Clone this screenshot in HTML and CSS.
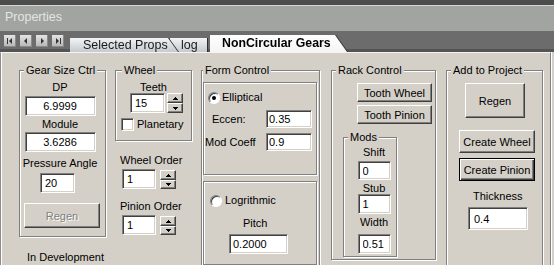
FILE: index.html
```html
<!DOCTYPE html>
<html>
<head>
<meta charset="utf-8">
<link rel="stylesheet" href="styles.css">
</head>
<body>
<div class="title">Properties</div>
<div class="tabstrip">
  <div class="nav">
    <span class="navbtn"><svg width="12" height="12" viewBox="0 0 12 12"><rect x="3" y="3" width="1" height="6"/><path d="M8 3v6L5 6z"/></svg></span>
    <span class="navbtn"><svg width="12" height="12" viewBox="0 0 12 12"><path d="M7 3v6L4 6z"/></svg></span>
    <span class="navbtn"><svg width="12" height="12" viewBox="0 0 12 12"><path d="M5 3v6l3-3z"/></svg></span>
    <span class="navbtn"><svg width="12" height="12" viewBox="0 0 12 12"><path d="M4 3v6l3-3z"/><rect x="8" y="3" width="1" height="6"/></svg></span>
  </div>
  <div class="tabs">
    <div class="tab tab-sel"><div class="face">Selected Props</div></div>
    <div class="tab tab-log"><div class="face">log</div></div>
    <div class="tab tab-act"><div class="face">NonCircular Gears</div></div>
  </div>
</div>
<div class="panel">
  <div class="col col-a">
    <fieldset class="grp g-gear">
      <legend>Gear Size Ctrl</legend>
      <div class="gbody">
        <div class="lbl l-dp">DP</div>
        <input class="tb tb-dp" value="6.9999">
        <div class="lbl l-mod">Module</div>
        <input class="tb tb-mod" value="3.6286">
        <div class="lbl l-pa">Pressure Angle</div>
        <input class="tb tb-pa" value="20">
        <button class="btn b-dis" disabled>Regen</button>
      </div>
    </fieldset>
    <div class="dev">In Development</div>
  </div>

  <div class="col col-b">
    <fieldset class="grp g-wheel">
      <legend>Wheel</legend>
      <div class="wbody">
        <div class="lbl l-teeth">Teeth</div>
        <div class="spin spin-teeth">
          <input class="tb tb-teeth" value="15">
          <span class="spinbtns">
            <span class="sb"><svg width="5" height="3" viewBox="0 0 5 3"><path d="M2 0h1v1h1v1h1v1H0V2h1V1h1z"/></svg></span>
            <span class="sb"><svg width="5" height="3" viewBox="0 0 5 3"><path d="M0 0h5v1H4v1H3v1H2V2H1V1H0z"/></svg></span>
          </span>
        </div>
        <div class="chk-row"><span class="chk"></span>Planetary</div>
      </div>
    </fieldset>
    <div class="lbl l-order">Wheel Order</div>
    <div class="spin spin-order">
      <input class="tb tb-order" value="1">
      <span class="spinbtns">
        <span class="sb"><svg width="5" height="3" viewBox="0 0 5 3"><path d="M2 0h1v1h1v1h1v1H0V2h1V1h1z"/></svg></span>
        <span class="sb"><svg width="5" height="3" viewBox="0 0 5 3"><path d="M0 0h5v1H4v1H3v1H2V2H1V1H0z"/></svg></span>
      </span>
    </div>
    <div class="lbl l-order2">Pinion Order</div>
    <div class="spin spin-order">
      <input class="tb tb-order" value="1">
      <span class="spinbtns">
        <span class="sb"><svg width="5" height="3" viewBox="0 0 5 3"><path d="M2 0h1v1h1v1h1v1H0V2h1V1h1z"/></svg></span>
        <span class="sb"><svg width="5" height="3" viewBox="0 0 5 3"><path d="M0 0h5v1H4v1H3v1H2V2H1V1H0z"/></svg></span>
      </span>
    </div>
  </div>

  <div class="col col-c">
    <fieldset class="grp g-form">
      <legend>Form Control</legend>
      <div class="frame f1">
        <div class="radio-row r1"><span class="radio on"></span>Elliptical</div>
        <div class="frow r-eccen"><span class="flbl">Eccen:</span><input class="tb tb-f" value="0.35"></div>
        <div class="frow r-modc"><span class="flbl">Mod Coeff</span><input class="tb tb-f" value="0.9"></div>
      </div>
      <div class="frame f2">
        <div class="radio-row r2"><span class="radio"></span>Logrithmic</div>
        <div class="lbl l-pitch">Pitch</div>
        <input class="tb tb-pitch" value="0.2000">
      </div>
    </fieldset>
  </div>

  <div class="col col-d">
    <fieldset class="grp g-rack">
      <legend>Rack Control</legend>
      <div class="rbody">
        <button class="btn b-tooth">Tooth Wheel</button>
        <button class="btn b-tooth b-tooth2">Tooth Pinion</button>
        <fieldset class="grp g-mods">
          <legend>Mods</legend>
          <div class="mbody">
            <div class="lbl l-shift">Shift</div>
            <input class="tb tb-mods tb-shift" value="0">
            <div class="lbl l-stub">Stub</div>
            <input class="tb tb-mods" value="1">
            <div class="lbl l-width">Width</div>
            <input class="tb tb-mods tb-width" value="0.51">
          </div>
        </fieldset>
      </div>
    </fieldset>
  </div>

  <div class="col col-e">
    <fieldset class="grp g-add">
      <legend>Add to Project</legend>
      <div class="abody">
        <button class="btn b-regen">Regen</button>
        <button class="btn b-create b-cw">Create Wheel</button>
        <button class="btn b-create b-cp b-default">Create Pinion</button>
        <div class="lbl l-thick">Thickness</div>
        <input class="tb tb-thick" value="0.4">
      </div>
    </fieldset>
  </div>
</div>
</body>
</html>
```

FILE: styles.css
```css
* { box-sizing: border-box; }
html, body { margin: 0; padding: 0; }
body {
  width: 554px;
  height: 265px;
  overflow: hidden;
  background: #d4d0c8;
  font-family: "Liberation Sans", Arial, sans-serif;
  font-size: 11px;
  color: #000;
}

/* title */
.title {
  height: 31px;
  border-top: 5px solid #4d4d4d;
  background: #a2a4a2;
  box-shadow: inset 0 1px 0 #d6d6d6;
  color: #e4e4e4;
  font-size: 12.5px;
  line-height: 24px;
  padding-left: 5px;
}

/* tab strip */
.tabstrip {
  height: 21px;
  background: #6c6c6c;
  box-shadow: inset 0 -3px 0 #545454;
  display: flex;
  align-items: flex-end;
  padding-left: 4px;
}
.nav {
  display: flex;
  gap: 4px;
  align-self: flex-start;
  margin-top: 4px;
}
.navbtn {
  width: 12px;
  height: 12px;
  display: block;
  background: linear-gradient(#e4e4e4, #b4b4b4);
  box-shadow: inset -1px -1px 0 #8a8a8a;
}
.navbtn svg { display: block; fill: #333; }

.tabs {
  display: flex;
  align-items: flex-end;
  margin-left: 6px;
}
.tab {
  position: relative;
  filter: drop-shadow(1px 0 0 #2e2e2e);
}
.face {
  font-size: 12.5px;
  color: #1a1a1a;
  white-space: nowrap;
}
.tab-sel { z-index: 2; }
.tab-sel .face {
  width: 108px;
  height: 14px;
  line-height: 14px;
  padding-left: 13px;
  background: linear-gradient(#f2f4f6, #c6cace);
  clip-path: polygon(0 0, 98px 0, 108px 100%, 0 100%);
}
.tab-log { z-index: 1; margin-left: -8px; }
.tab-log .face {
  width: 37px;
  height: 14px;
  line-height: 14px;
  padding-left: 11px;
  background: linear-gradient(#f2f4f6, #c6cace);
}
.tab-act { z-index: 3; margin-left: 3px; }
.tab-act .face {
  width: 137px;
  height: 17px;
  line-height: 16px;
  padding-left: 12px;
  font-weight: bold;
  font-size: 12.3px;
  color: #000;
  background: linear-gradient(#ffffff, #f4f4f4);
  clip-path: polygon(0 0, 125px 0, 137px 100%, 0 100%);
}

/* panel */
.panel {
  width: 551px;
  height: 213px;
  border-top: 1px solid #f4f4f4;
  border-left: 1px solid #8c8c8c;
  border-right: 1px solid #808080;
  box-shadow: 1px 0 0 #fff, inset 1px 0 0 #fff;
  display: flex;
  align-items: flex-start;
  padding-top: 11px;
  background: #d4d0c8;
}
.col { display: flex; flex-direction: column; align-items: flex-start; flex: none; }
.col-a { width: 87px; margin-left: 18px; }
.col-b { width: 77px; margin-left: 9px; }
.col-c { width: 119px; margin-left: 9px; }
.col-d { width: 105px; margin-left: 11px; }
.col-e { width: 97px; margin-left: 10px; }

/* groups */
.grp {
  margin: 0;
  padding: 0;
  min-width: 0;
  border: 1px solid #808080;
  box-shadow: 1px 1px 0 #fff, inset 1px 1px 0 #fff;
}
.grp > legend {
  padding: 0 2px;
  margin-left: 4px;
  line-height: 13px;
  font-size: 11px;
  background: #d4d0c8;
}
.frame {
  border: 1px solid #808080;
  box-shadow: 1px 1px 0 #fff, inset 1px 1px 0 #fff;
}

.lbl { line-height: 13px; white-space: nowrap; }

/* inputs */
.tb {
  display: block;
  margin: 0;
  font-family: "Liberation Sans", Arial, sans-serif;
  font-size: 11px;
  color: #000;
  background: #fff;
  border: 1px solid;
  border-color: #808080 #fff #fff #808080;
  box-shadow: inset 1px 1px 0 #404040, inset -1px -1px 0 #d4d0c8;
  padding: 0 0 0 3px;
  outline: none;
}

/* buttons */
.btn {
  display: block;
  margin: 0;
  padding: 0;
  font-family: "Liberation Sans", Arial, sans-serif;
  font-size: 11px;
  color: #000;
  background: #d4d0c8;
  border: 1px solid;
  border-color: #fff #404040 #404040 #fff;
  box-shadow: inset -1px -1px 0 #808080;
}
.b-default {
  border: 1px solid #000;
  box-shadow: inset 1px 1px 0 #fff, inset -1px -1px 0 #404040, inset -2px -2px 0 #808080;
}
.b-dis {
  color: #808080;
  text-shadow: 1px 1px 0 #fff;
}

/* col A */
.g-gear { width: 87px; }
.gbody {
  display: flex;
  flex-direction: column;
  align-items: center;
  padding: 4px 9px 8px 4px;
}
.tb-dp, .tb-mod { width: 71px; height: 20px; margin-top: 2px; text-align: center; padding: 0; }
.tb-mod { margin-top: 1px; }
.l-mod { margin-top: 2px; }
.l-pa { margin-top: 5px; }
.tb-pa { width: 35px; height: 20px; margin-top: 3px; margin-right: 5px; padding-left: 4px; }
.b-dis { width: 76px; height: 25px; margin-top: 10px; align-self: flex-start; }
.dev { margin-top: 14px; margin-left: 8px; line-height: 13px; white-space: nowrap; }

/* col B */
.g-wheel { width: 77px; }
.g-wheel > legend { margin-left: 6px; }
.wbody { display: flex; flex-direction: column; padding: 4px 0 9px 0; }
.l-teeth { line-height: 12px; text-align: center; }
.spin { display: flex; align-items: flex-start; }
.spin-teeth { margin-left: 14px; gap: 2px; }
.tb-teeth { width: 35px; height: 20px; padding-left: 4px; }
.spinbtns { display: flex; flex-direction: column; width: 16px; }
.sb {
  display: flex;
  align-items: center;
  justify-content: center;
  height: 10px;
  background: #d4d0c8;
  border: 1px solid;
  border-color: #fff #404040 #404040 #fff;
  box-shadow: inset -1px -1px 0 #808080;
}
.sb svg { display: block; fill: #000; }
.chk-row {
  display: flex;
  align-items: center;
  gap: 3px;
  margin-top: 4px;
  margin-left: 5px;
  height: 14px;
  line-height: 14px;
}
.chk {
  width: 13px;
  height: 13px;
  background: #fff;
  border: 1px solid;
  border-color: #808080 #fff #fff #808080;
  box-shadow: inset 1px 1px 0 #404040, inset -1px -1px 0 #d4d0c8;
}
.l-order { margin-top: 13px; margin-left: 5px; }
.l-order2 { margin-top: 11px; margin-left: 5px; }
.spin-order { margin-top: 2px; margin-left: 7px; gap: 4px; }
.tb-order { width: 34px; height: 20px; padding-left: 4px; }
.spin-order .spinbtns { margin-top: 1px; }
.spin-order .sb + .sb { height: 9px; }

/* col C */
.g-form { width: 119px; height: 203px; }
.g-form > legend { margin-left: 1px; }
.f1 { width: 114px; height: 93px; margin: 5px 0 0 1px; }
.f2 { width: 114px; height: 84px; margin: 6px 0 0 1px; }
.radio-row { display: flex; align-items: center; height: 13px; line-height: 13px; }
.r1 { margin-top: 8px; margin-left: 4px; gap: 2px; }
.r2 { margin-top: 12px; margin-left: 6px; gap: 3px; }
.radio {
  position: relative;
  width: 12px;
  height: 12px;
  border-radius: 50%;
  background: #fff;
  border: 1px solid;
  border-color: #808080 #fff #fff #808080;
  box-shadow: inset 1px 1px 0 #404040;
}
.radio.on::after {
  content: "";
  position: absolute;
  left: 3px;
  top: 3px;
  width: 4px;
  height: 4px;
  border-radius: 50%;
  background: #000;
}
.frow { display: flex; align-items: center; height: 18px; }
.r-eccen { margin-top: 6px; }
.r-modc { margin-top: 5px; }
.flbl { width: 62px; white-space: nowrap; }
.r-eccen .flbl { padding-left: 8px; }
.r-modc .flbl { padding-left: 1px; }
.tb-f { width: 46px; height: 18px; padding-left: 2px; }
.l-pitch { margin-top: 10px; margin-left: 39px; }
.tb-pitch { width: 59px; height: 20px; margin-top: 4px; margin-left: 25px; padding-left: 3px; }

/* col D */
.g-rack { width: 105px; }
.rbody { display: flex; flex-direction: column; align-items: flex-start; padding: 6px 0 2px 0; }
.b-tooth { width: 75px; height: 19px; margin-left: 25px; }
.b-tooth2 { margin-top: 3px; }
.g-mods { width: 54px; margin-top: 7px; margin-left: 11px; }
.mbody { display: flex; flex-direction: column; align-items: center; padding: 2px 0 2px 8px; }
.l-stub { margin-top: 2px; line-height: 12px; }
.l-width { margin-top: 2px; }
.tb-mods { width: 33px; height: 20px; padding-left: 4px; }
.tb-shift { height: 19px; margin-top: 2px; }
.tb-width { margin-top: 5px; }

/* col E */
.g-add { width: 97px; height: 203px; }
.abody { display: flex; flex-direction: column; align-items: flex-start; padding-top: 6px; }
.b-regen { width: 60px; height: 35px; margin-left: 18px; }
.b-create { width: 76px; height: 23px; margin-left: 12px; }
.b-cw { margin-top: 12px; }
.b-cp { margin-top: 5px; }
.l-thick { margin-top: 9px; margin-left: 26px; }
.tb-thick { width: 60px; height: 23px; margin-top: 4px; margin-left: 21px; padding-left: 5px; }
```
